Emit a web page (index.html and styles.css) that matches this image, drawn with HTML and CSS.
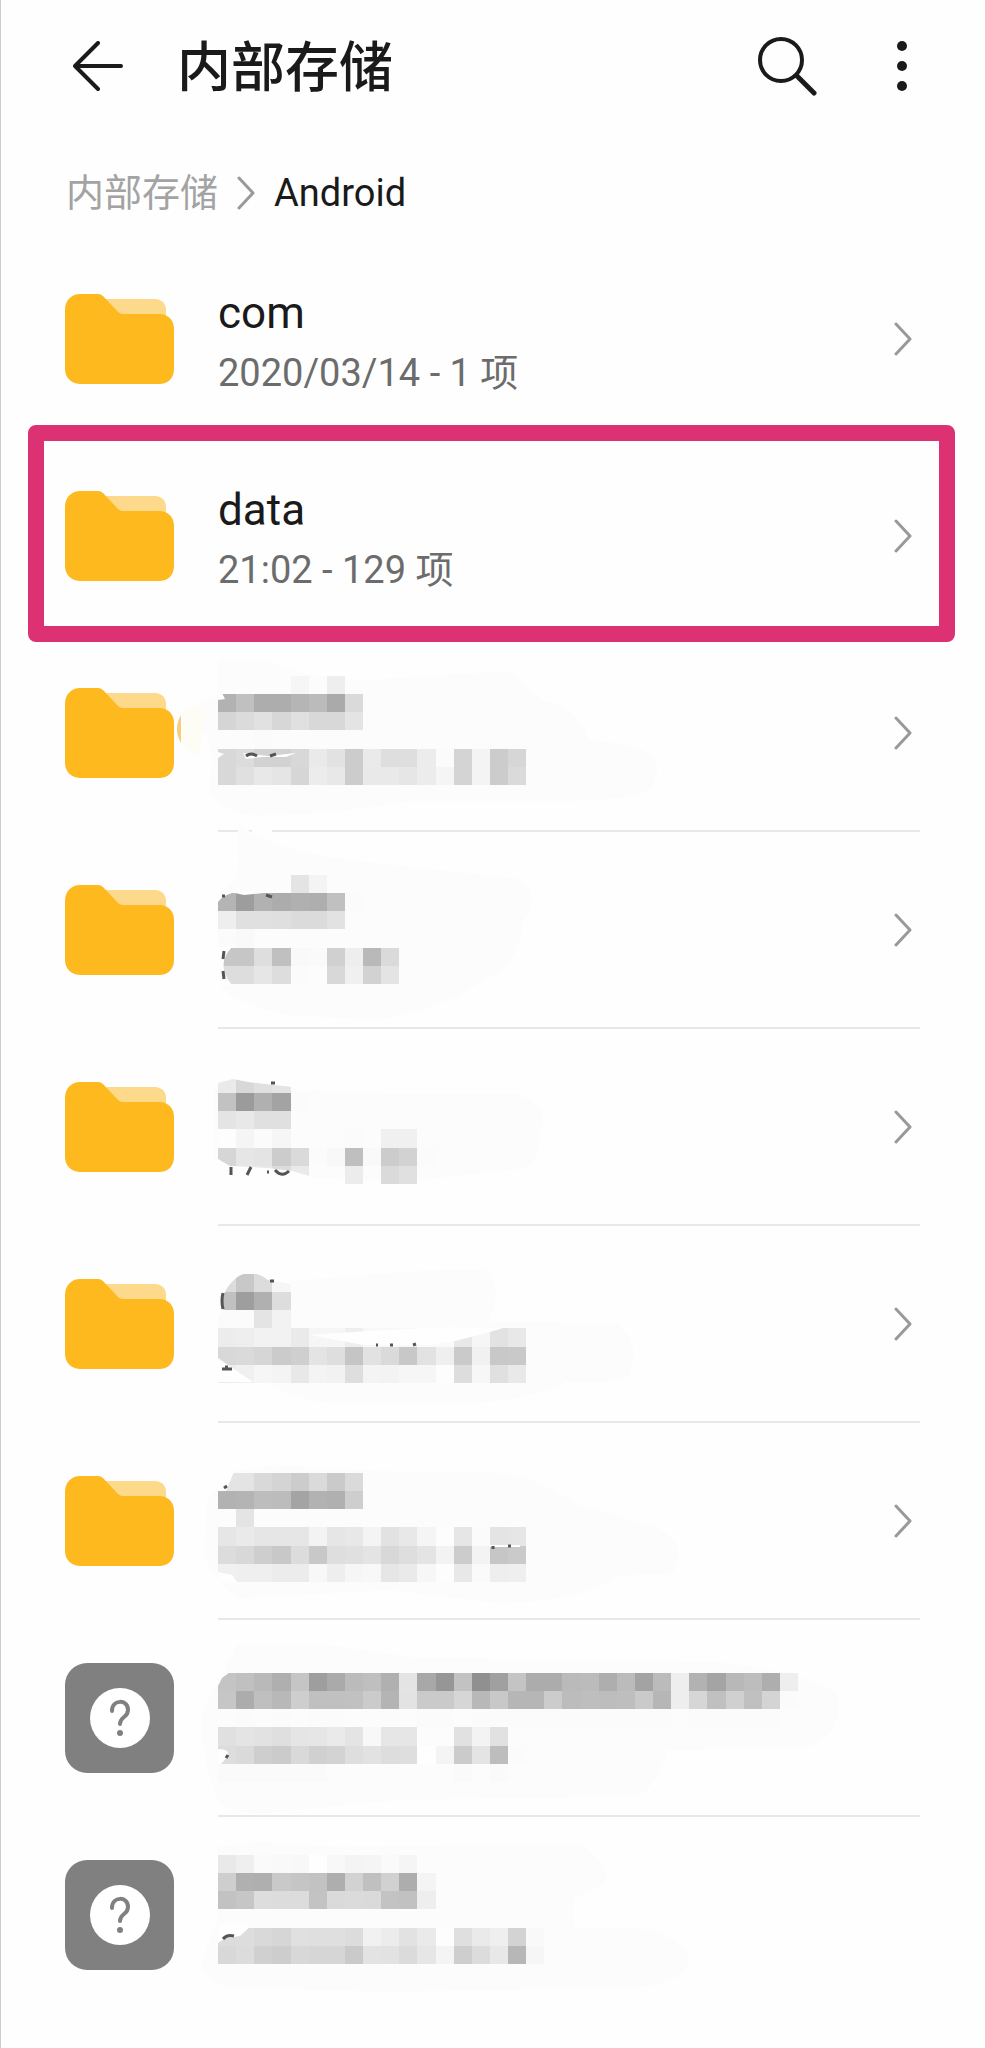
FILE: index.html
```html
<!DOCTYPE html>
<html lang="zh-CN">
<head>
<meta charset="utf-8">
<meta name="viewport" content="width=device-width, initial-scale=1">
<title>内部存储</title>
<link rel="stylesheet" href="styles.css">
</head>
<body>
<svg class="sprite" aria-hidden="true">
  <symbol id="folder" viewBox="0 0 110 110">
    <path fill="#fdd98b" d="M36 15H90C97 15 101 20 101 26V37H36Z"/>
    <path fill="#fdb91d" d="M15 10H33Q36 10 38 12L53 28Q55 30 58 30H94C104 30 109 37 109 45V85C109 94 103 100 94 100H16C7 100 0 94 0 85V26C0 16 7 10 15 10Z"/>
  </symbol>
  <symbol id="unknown" viewBox="0 0 110 110">
    <rect width="109" height="110" rx="22" fill="#808080"/>
    <circle cx="55" cy="55" r="30" fill="#fff"/>
    <path d="M47 48C47 36 63 36 63 47C63 55 55 53 55 61" fill="none" stroke="#808080" stroke-width="4" stroke-linecap="round"/>
    <circle cx="55" cy="70" r="3" fill="#808080"/>
  </symbol>
  <symbol id="chevron" viewBox="0 0 18 34">
    <path d="M2 2L16 17L2 32" fill="none" stroke="#999" stroke-width="3" stroke-linecap="round" stroke-linejoin="round"/>
  </symbol>
</svg>

<header class="topbar">
  <button class="icon-button" type="button" aria-label="返回">
    <svg width="50" height="50" viewBox="0 0 50 50"><path d="M25 2L2 25L25 48M3 25H48" fill="none" stroke="#1a1a1a" stroke-width="4" stroke-linecap="round" stroke-linejoin="round"/></svg>
  </button>
  <h1 class="title">内部存储</h1>
  <button class="icon-button" type="button" aria-label="搜索">
    <svg width="60" height="60" viewBox="0 0 60 60"><circle cx="24" cy="24" r="21" fill="none" stroke="#1a1a1a" stroke-width="4"/><path d="M40 40L57 57" stroke="#1a1a1a" stroke-width="5" stroke-linecap="round"/></svg>
  </button>
  <button class="icon-button menu" type="button" aria-label="更多">
    <svg width="10" height="50" viewBox="0 0 10 50" fill="#1a1a1a"><circle cx="5" cy="5" r="5"/><circle cx="5" cy="25" r="5"/><circle cx="5" cy="45" r="5"/></svg>
  </button>
</header>

<nav class="crumbs" aria-label="路径">
  <a class="crumb" href="#">内部存储</a>
  <svg width="18" height="34"><use href="#chevron"/></svg>
  <span aria-current="page">Android</span>
</nav>

<main>
  <ul class="list">
    <li><a class="row" href="#com">
      <svg class="icon"><use href="#folder"/></svg>
      <span class="body"><span class="texts"><span class="name">com</span><span class="meta">2020/03/14 - 1 项</span></span><svg class="go"><use href="#chevron"/></svg></span>
    </a></li>
    <li class="marked"><a class="row" href="#data">
      <svg class="icon"><use href="#folder"/></svg>
      <span class="body"><span class="texts"><span class="name">data</span><span class="meta">21:02 - 129 项</span></span><svg class="go"><use href="#chevron"/></svg></span>
    </a></li>
    <li><a class="row" href="#f3" aria-label="文件夹">
      <svg class="icon"><use href="#folder"/></svg>
      <span class="body ruled"><svg class="mosaic" data-mosaic="0" viewBox="0 0 640 197"></svg><svg class="go"><use href="#chevron"/></svg></span>
    </a></li>
    <li><a class="row" href="#f4" aria-label="文件夹">
      <svg class="icon"><use href="#folder"/></svg>
      <span class="body ruled"><svg class="mosaic" data-mosaic="1" viewBox="0 0 640 197"></svg><svg class="go"><use href="#chevron"/></svg></span>
    </a></li>
    <li><a class="row" href="#f5" aria-label="文件夹">
      <svg class="icon"><use href="#folder"/></svg>
      <span class="body ruled"><svg class="mosaic" data-mosaic="2" viewBox="0 0 640 197"></svg><svg class="go"><use href="#chevron"/></svg></span>
    </a></li>
    <li><a class="row" href="#f6" aria-label="文件夹">
      <svg class="icon"><use href="#folder"/></svg>
      <span class="body ruled"><svg class="mosaic" data-mosaic="3" viewBox="0 0 640 197"></svg><svg class="go"><use href="#chevron"/></svg></span>
    </a></li>
    <li><a class="row" href="#f7" aria-label="文件夹">
      <svg class="icon"><use href="#folder"/></svg>
      <span class="body ruled"><svg class="mosaic" data-mosaic="4" viewBox="0 0 640 197"></svg><svg class="go"><use href="#chevron"/></svg></span>
    </a></li>
    <li><a class="row" href="#f8" aria-label="文件">
      <svg class="icon"><use href="#unknown"/></svg>
      <span class="body ruled"><svg class="mosaic" data-mosaic="5" viewBox="0 0 640 197"></svg></span>
    </a></li>
    <li><a class="row" href="#f9" aria-label="文件">
      <svg class="icon"><use href="#unknown"/></svg>
      <span class="body"><svg class="mosaic" data-mosaic="6" viewBox="0 0 640 197"></svg></span>
    </a></li>
  </ul>
</main>
<script src="mosaic.js"></script>
</body>
</html>
```

FILE: styles.css
```css
* {
  box-sizing: border-box;
}

body {
  margin: 0;
  min-height: 100vh;
  border-left: 1px solid #ccc;
  background: #fefefe;
  color: #1a1a1a;
  font-family: Roboto, "Noto Sans CJK SC", sans-serif;
}

svg {
  display: block;
  flex: none;
}

a {
  color: inherit;
  text-decoration: none;
}

.sprite {
  position: absolute;
  width: 0;
  height: 0;
}

.topbar {
  display: flex;
  align-items: center;
  height: 131px;
  padding: 0 78px 0 72px;
}

.icon-button {
  padding: 0;
  border: 0;
  background: none;
}

.menu {
  margin-left: 80px;
}

.title {
  flex: 1;
  margin: 0;
  padding: 6px 0 0 54px;
  font-size: 54px;
  line-height: 64px;
  font-weight: 500;
}

.crumbs {
  display: flex;
  align-items: center;
  gap: 19px;
  padding: 37px 65px 23px;
  font-size: 38px;
  line-height: 50px;
}

.crumb {
  color: #a3a3a3;
}

.list {
  margin: 0;
  padding: 0;
  list-style: none;
}

.row {
  display: flex;
  align-items: center;
  gap: 43px;
  height: 197px;
  padding: 0 65px 0 64px;
}

.icon {
  width: 110px;
  height: 110px;
  margin-bottom: 2px;
}

.body {
  display: flex;
  align-items: center;
  justify-content: space-between;
  flex: 1;
  min-width: 0;
  height: 197px;
  border-bottom: 2px solid transparent;
}

.ruled {
  border-color: #e8e8e8;
}

.texts {
  display: flex;
  flex-direction: column;
  gap: 4px;
  padding-top: 8px;
}

.name {
  font-size: 44px;
  line-height: 56px;
}

.meta {
  color: #6c6c6c;
  font-size: 38px;
  line-height: 56px;
}

.go {
  width: 18px;
  height: 34px;
  margin-right: 8px;
}

.mosaic {
  width: 640px;
  height: 197px;
  align-self: flex-start;
  overflow: visible;
}

.marked {
  position: relative;
}

.marked::after {
  content: "";
  position: absolute;
  inset: -13px 30px -7px 27px;
  border: 16px solid #dc3273;
  border-radius: 8px;
  pointer-events: none;
}
```

FILE: mosaic.js
```js
// Grey levels of the pixelated names, one hex pair per block ("--" is empty).
// top: first block line inside the row; halo: smudge behind; mask: cut corners; ink: stray strokes.
const CELL = 18.125;
const mosaics = [
  {
    top: 41,
    halo: "M0 25H50Q90 45 150 45L290 36Q320 60 325 66Q360 70 370 105L410 110Q450 120 435 150Q425 166 340 166H190Q100 182 30 180Q-20 170 -5 130L-10 100Q-40 95 -30 75L0 60Z",
    lines: [
      "--------f6--ee",
      "b2c0adadb5bbaada",
      "d5dbe1d7e0d8d8e4",
      "fcfcfbfcfcfcfcfc",
      "d8dcd2d2d8eae2cceadedeecfbd4f4ccd6",
      "d8e0e8e5d6ece8cce9e9e6ecf5d4f4ccda"
    ],
    mask: "M0 58H4L7 64L0 65ZM0 123L6 119L0 117ZM25 118L50 121L78 118L68 122H44L28 124ZM34 193H54V199H34Z",
    ink: "M28 121Q33 117 39 121M52 121L58 119",
    extra: '<path d="M-37 80Q-45 94 -37 108Z" fill="#f5cf77"/><path d="M-36 74L-14 72L-18 120Q-30 118 -36 108Z" fill="#fdfdf6"/>'
  },
  {
    top: 43,
    halo: "M20 -10Q50 20 150 30L300 47Q325 60 305 90Q300 135 270 145Q220 180 160 188L70 183Q10 170 0 150V60Q25 50 20 20Z",
    lines: [
      "--------e4f4",
      "b49db1acb0aec0fb",
      "eee0e0dfdbdbe2",
      "fbf9",
      "c6c6dec0f9fad0eeb9da",
      "dddde6ddfbfcd8f0d2e4"
    ],
    mask: "M0 61H14Q4 64 0 70ZM0 115H14Q-3 133 14 153H0ZM17 61H46L26 63Z",
    ink: "M4 64H7M6 119L5 127M5 139L6 147M48 63L54 65"
  },
  {
    top: 46,
    halo: "M-5 60L60 60L180 65L300 65Q335 80 322 105Q320 140 300 140L180 153L60 147L-5 130Z",
    lines: [
      "ead8e0e4",
      "c29bb0a3fb",
      "e4e8e0e0",
      "fdf5fbf6fc----fb--f0f0",
      "d6e6e4ccdafbf8bff9ccd2fb",
      "e4e8e8dcea----ec--dae0"
    ],
    mask: "M0 45H74V58L30 53L15 50L0 54ZM0 130L12 137L50 139L74 142L91 147V156H0Z",
    ink: "M53 54H57M13 138V146M33 138L29 146M49 143H51M57 141Q64 149 71 142"
  },
  {
    top: 48,
    halo: "M72 55L200 45L270 43Q285 70 270 95L400 98Q425 120 410 150Q390 160 350 155Q300 180 220 178L110 177Q50 170 0 120V80Z",
    lines: [
      "dcc8dcf6",
      "c09eb0dd",
      "fbfbe4f2",
      "eceef2f2eaf6f6eef8f8f8fafae8f6e2e8",
      "d8dad6cbcfe4dec5e2dac8e2efcaf1c8c9",
      "ecf0f6f4e8f4f2def4f3f6f6fdddf7e0e9"
    ],
    mask: "M0 46H74V58L50 54Q28 38 12 58Q1 72 6 86L0 90ZM92 109L150 105L230 101L285 102L265 108L233 116L210 119H145ZM0 132L13 141L35 156H0Z",
    ink: "M5 67Q3 75 5 83M52 55H56M158 119H160M172 119H175M195 119L198 118M4 143H14M7 141H10"
  },
  {
    top: 50,
    halo: "M15 48L60 42L160 48L290 50Q330 60 355 80L440 105Q470 120 455 150L400 153Q360 180 280 180L170 167L20 175Q-5 160 -15 130L-10 75Z",
    lines: [
      "e4e4d9d4ccdacada",
      "b2b4bdbca4b2b0ce",
      "fce4fcfcfcfc",
      "e6eae6e6e6f3e6e8f4e2e8f5fde6fbe4e6",
      "dcd8cec8dcc8dee0e4d8dee4f3ccf3c6ca",
      "f0efefececf8eef6f8e6eaf7fde8faeeef"
    ],
    mask: "M0 49H16L8 68H0ZM0 149L14 152L20 160H0ZM272 122H302V124H272Z",
    ink: "M6 65L9 63M275 123V126M290 123H293"
  },
  {
    top: 53,
    halo: "M20 25H110L200 38L400 40L500 42Q600 55 620 75Q625 115 590 127L450 130Q440 165 420 176L180 180L50 193Q10 194 0 180Q-20 130 -15 90Z",
    lines: [
      "c4c0b9afc59eaabbbfb0e4a896c290a0c4acacbabbaebba3bbeeb2a4b8bdaeee",
      "c6acbfb8cec0c0c1cbb4e3cacad6b8c8b6b6ccbcbebdbecab6eed6c0d0c0d4fb",
      "fcfbfcfbfcfbfbfcfcfb--fbfbfcfbfbfbfbfbfbfbfbfbfbfb--fbfbfbfbfb",
      "e0e4e2dfe5e6eae4f8e6e6----e1f3e1",
      "dddacecbd9d0d3dee2dddefef4cbe4bdfb",
      "fafafafafafafcfcfcfc------fa--fa"
    ],
    mask: "M0 52H12L4 58L0 66ZM0 129Q12 129 10 136L3 144H0Z",
    ink: "M10 135L8 138"
  },
  {
    top: 38,
    halo: "M0 30L40 25L120 30L350 26Q380 30 390 60Q380 75 355 80V110L430 112Q480 130 468 150Q455 170 410 170L170 175L10 170Q-20 160 -15 140L0 100Z",
    lines: [
      "e9effaf9f8fef8f4f5faf5",
      "ceb0afc9c5c2aed2c0d1adf4",
      "c2c6dddcdcc3dadbdac3c1ee",
      "",
      "dcddd9d6e0dfdfdcf1ece2eafddfeaefd3f9",
      "d8dcd0cdd8d6d6cae3e2dbe6f4cedce8b7f6"
    ],
    mask: "M0 108H34L22 119L8 121L0 126Z",
    ink: "M5 122Q9 117 16 119"
  }
];

for (const svg of document.querySelectorAll("[data-mosaic]")) {
  const m = mosaics[svg.dataset.mosaic];
  let out = `<path d="${m.halo}" fill="#fcfcfc"/>`;
  m.lines.forEach((line, r) => {
    for (let c = 0; c * 2 < line.length; c++) {
      const v = line.slice(c * 2, c * 2 + 2);
      if (v === "--") continue;
      const x = Math.round(c * CELL);
      const y = Math.round(m.top + r * CELL);
      const w = Math.round((c + 1) * CELL) - x;
      const h = Math.round(m.top + (r + 1) * CELL) - y;
      out += `<rect x="${x}" y="${y}" width="${w}" height="${h}" fill="#${v}${v}${v}"/>`;
    }
  });
  out += `<path d="${m.mask}" fill="#fefefe"/>`;
  out += `<path d="${m.ink}" fill="none" stroke="#555" stroke-width="3"/>`;
  svg.innerHTML = out + (m.extra || "");
}
```
